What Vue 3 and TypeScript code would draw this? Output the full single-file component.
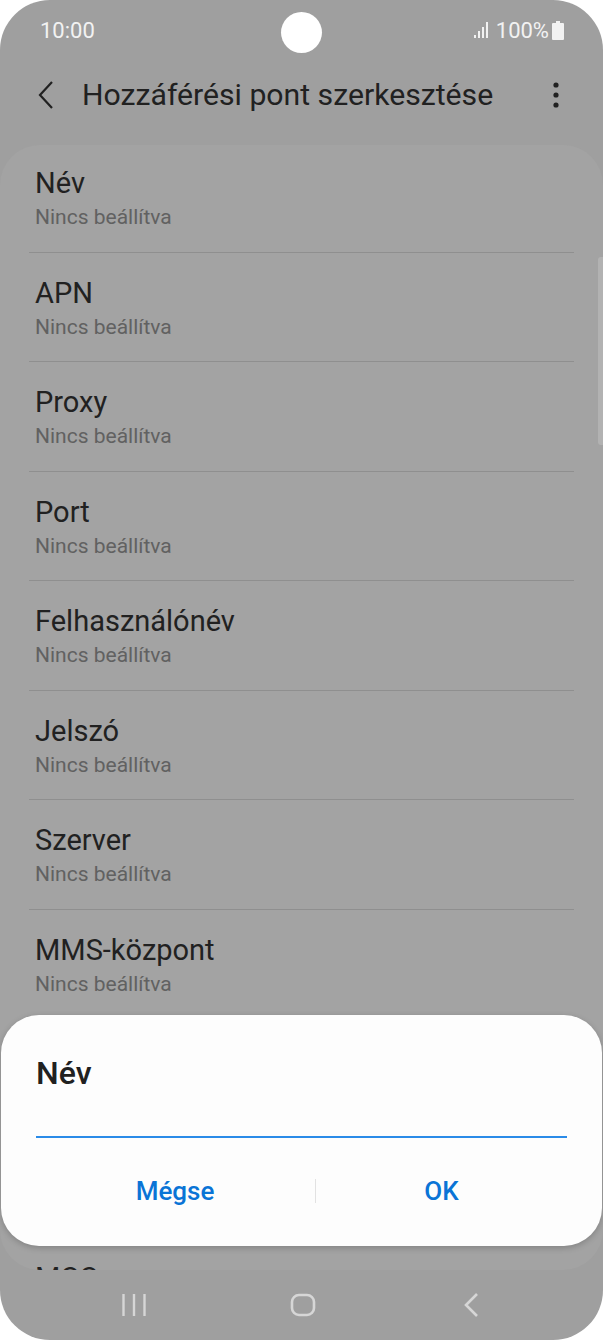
<script setup lang="ts">
const rows: string[] = [
  'Név',
  'APN',
  'Proxy',
  'Port',
  'Felhasználónév',
  'Jelszó',
  'Szerver',
  'MMS-központ',
  'MMS-proxy',
  'MMS-port',
  'MCC'
]
</script>

<template>
  <div class="phone">
    <header class="status-bar">
      <span class="clock">10:00</span>
      <div class="status-right">
        <svg class="signal" width="16" height="18" viewBox="0 0 16 18">
          <rect x="1" y="14" width="2" height="3" fill="#f2f2f2" />
          <rect x="5" y="10" width="2" height="7" fill="#f2f2f2" />
          <rect x="9" y="6" width="2" height="11" fill="#f2f2f2" />
          <rect x="13" y="1" width="2" height="16" fill="#f2f2f2" />
        </svg>
        <span class="battery-text">100%</span>
        <svg class="battery" width="12" height="19" viewBox="0 0 12 19">
          <path d="M4 0h4v2h3a1 1 0 0 1 1 1v15a1 1 0 0 1-1 1H1a1 1 0 0 1-1-1V3a1 1 0 0 1 1-1h3z" fill="#f2f2f2" />
        </svg>
      </div>
    </header>
    <div class="camera"></div>

    <div class="app-bar">
      <svg class="back" width="18" height="30" viewBox="0 0 18 30">
        <path d="M15 2 3 15l12 13" fill="none" stroke="#212121" stroke-width="2.2" />
      </svg>
      <h1 class="page-title">Hozzáférési pont szerkesztése</h1>
      <svg class="more" width="6" height="26" viewBox="0 0 6 26">
        <circle cx="3" cy="3" r="2.6" fill="#212121" />
        <circle cx="3" cy="13" r="2.6" fill="#212121" />
        <circle cx="3" cy="23" r="2.6" fill="#212121" />
      </svg>
    </div>

    <main class="card">
      <div v-for="row in rows" :key="row" class="row">
        <div class="row-title">{{ row }}</div>
        <div class="row-sub">Nincs beállítva</div>
      </div>
    </main>
    <div class="scrollbar"></div>

    <nav class="nav-bar">
      <svg width="26" height="24" viewBox="0 0 26 24">
        <path d="M2.5 1v22M13 1v22M23.5 1v22" stroke="#d6d6d6" stroke-width="2.4" fill="none" />
      </svg>
      <svg width="26" height="24" viewBox="0 0 26 24">
        <rect x="2" y="2" width="22" height="20" rx="7" stroke="#d6d6d6" stroke-width="2.6" fill="none" />
      </svg>
      <svg width="26" height="26" viewBox="0 0 26 26">
        <path d="M18 2 7 13l11 11" stroke="#d6d6d6" stroke-width="2.6" fill="none" />
      </svg>
    </nav>

    <section class="dialog">
      <h2 class="dialog-title">Név</h2>
      <div class="dialog-input"></div>
      <div class="dialog-actions">
        <button class="action action-cancel">Mégse</button>
        <span class="action-divider"></span>
        <button class="action">OK</button>
      </div>
    </section>
  </div>
</template>

<style>
html,
body {
  margin: 0;
  background: #ffffff;
}
</style>

<style scoped>
.phone {
  position: relative;
  width: 603px;
  height: 1340px;
  overflow: hidden;
  display: flex;
  flex-direction: column;
  background: #9f9f9f;
  border-radius: 50px;
  font-family: Roboto, 'Liberation Sans', sans-serif;
}

.status-bar {
  height: 60px;
  padding: 0 40px;
  flex-shrink: 0;
  display: flex;
  align-items: center;
  justify-content: space-between;
  color: #f2f2f2;
  font-size: 22px;
  box-sizing: border-box;
}

.status-right {
  display: flex;
  align-items: center;
  margin-right: -1px;
}

.signal {
  margin-right: 7px;
}

.battery {
  margin-left: 3px;
}

.camera {
  position: absolute;
  top: 12px;
  left: 281px;
  width: 41px;
  height: 41px;
  border-radius: 50%;
  background: #ffffff;
}

.app-bar {
  height: 85px;
  flex-shrink: 0;
  display: flex;
  align-items: center;
  padding: 0 44px 16px 37px;
  box-sizing: border-box;
}

.back {
  flex-shrink: 0;
}

.page-title {
  flex: 1;
  margin: 0 0 0 27px;
  font-size: 30.2px;
  font-weight: 400;
  color: #212121;
  white-space: nowrap;
}

.card {
  height: 1125px;
  flex-shrink: 0;
  overflow: hidden;
  background: #a3a3a3;
  border-radius: 40px;
  padding: 0 29px;
  box-sizing: border-box;
}

.row {
  height: 109.5px;
  padding: 22px 6px 0;
  box-sizing: border-box;
  border-bottom: 1px solid #8f8f8f;
}

.row:first-child {
  margin-top: -2px;
}

.row-title {
  font-size: 29px;
  line-height: 37px;
  color: #212121;
}

.row-sub {
  margin-top: 1px;
  font-size: 21px;
  line-height: 28px;
  color: #616161;
}

.scrollbar {
  position: absolute;
  top: 257px;
  right: 0;
  width: 5px;
  height: 188px;
  border-radius: 3px 0 0 3px;
  background: #b2b2b2;
}

.nav-bar {
  flex: 1;
  display: flex;
  align-items: center;
  justify-content: space-between;
  padding: 0 118px 0 121px;
}

.dialog {
  position: absolute;
  top: 1015px;
  left: 1px;
  width: 601px;
  height: 231px;
  padding: 0 35px;
  box-sizing: border-box;
  background: #fdfdfd;
  border-radius: 38px;
  box-shadow: 0 2px 6px rgba(0, 0, 0, 0.2);
}

.dialog-title {
  margin: 0;
  padding-top: 39px;
  font-size: 32px;
  line-height: 38px;
  font-weight: 500;
  color: #212121;
}

.dialog-input {
  height: 2px;
  margin-top: 44px;
  background: #2a8be8;
}

.dialog-actions {
  display: flex;
  align-items: center;
  height: 28px;
  margin-top: 39px;
}

.action {
  flex: 1;
  border: none;
  background: none;
  padding: 0;
  font-family: inherit;
  font-size: 26px;
  font-weight: 500;
  color: #0a74d6;
}

.action-cancel {
  flex: 0 0 279px;
  padding-right: 1px;
}

.action-divider {
  width: 1px;
  height: 24px;
  background: #e2e2e2;
}
</style>
